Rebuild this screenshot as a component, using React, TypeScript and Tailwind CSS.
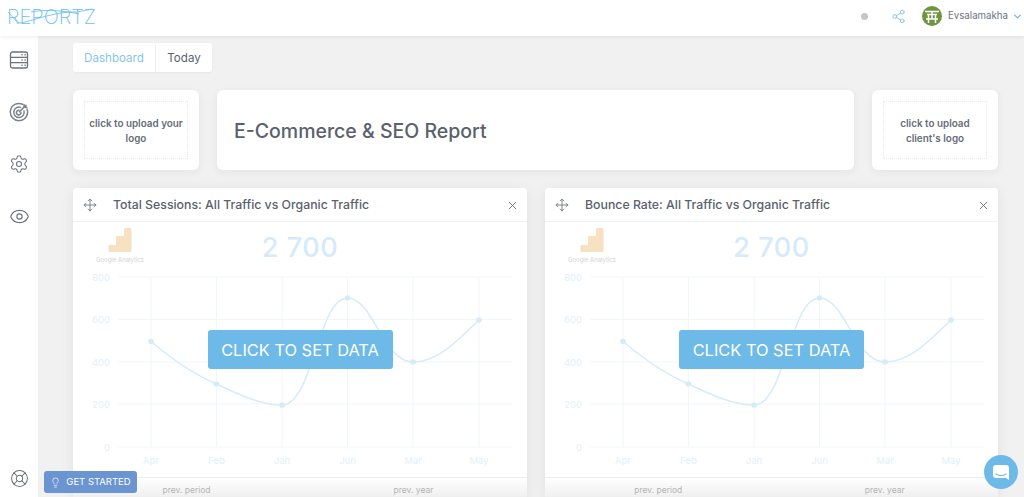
import { ChevronDown, Eye, LifeBuoy, Lightbulb, Move, Settings, Share2, X } from "lucide-react";

const yTicks = [
  { label: "800", y: 8 },
  { label: "600", y: 50.5 },
  { label: "400", y: 93 },
  { label: "200", y: 135 },
  { label: "0", y: 178 },
];

const points = [
  { label: "Apr", x: 78, y: 72.5 },
  { label: "Feb", x: 143.5, y: 115 },
  { label: "Jan", x: 209, y: 136 },
  { label: "Jun", x: 274.5, y: 29 },
  { label: "Mar", x: 340, y: 93 },
  { label: "May", x: 406, y: 51 },
];

function ServerIcon() {
  return (
    <svg width="20" height="20" viewBox="0 0 20 20" fill="none" stroke="#6b727c" strokeWidth="1.3">
      <rect x="1.5" y="2" width="17" height="16" rx="2" />
      <path d="M1.5 7.3H18.5M1.5 12.7H18.5" />
      <path d="M12.5 4.7H13.7M15.5 4.7H16.7M12.5 10H13.7M15.5 10H16.7M12.5 15.3H13.7M15.5 15.3H16.7" strokeWidth="1.4" />
    </svg>
  );
}

function TargetIcon() {
  return (
    <svg width="20" height="20" viewBox="0 0 20 20" fill="none" stroke="#7d838c" strokeWidth="1.5" strokeLinecap="round">
      <path d="M13.5 2.2A8.6 8.6 0 1 0 18 7" />
      <path d="M11.6 5.4A5.2 5.2 0 1 0 15 9" />
      <path d="M10 8.3A2.3 2.3 0 1 0 12 10.5" />
      <path d="M10.5 9.8L17 3.4M15 2.6L15 5.2L17.8 5.2" />
    </svg>
  );
}

function Avatar() {
  return (
    <svg width="20" height="20" viewBox="0 0 20 20">
      <circle cx="10" cy="10" r="10" fill="#6f9440" />
      <path d="M3 5.5H17M5 8.5H15M6.5 8.5V17M13.5 8.5V17M10 5.5V13M4 13H16" stroke="#fff" strokeWidth="1.5" fill="none" />
    </svg>
  );
}

function AnalyticsLogo() {
  return (
    <svg width="24" height="24" viewBox="0 0 24 24" fill="#f6e1c0">
      <rect x="0.5" y="17" width="8" height="7" rx="1" />
      <rect x="8" y="8" width="8.5" height="16" rx="1" />
      <rect x="16" y="0" width="7.5" height="24" rx="1.5" />
    </svg>
  );
}

function Chart() {
  return (
    <svg width="454" height="208" viewBox="0 0 454 208" className="block">
      {yTicks.map((t) => (
        <g key={t.label}>
          <line x1="45" x2="439" y1={t.y} y2={t.y} stroke="#f1f6fa" />
          <text x="37" y={t.y + 3.5} textAnchor="end" fontSize="9.5" fill="#e2f0fa">
            {t.label}
          </text>
        </g>
      ))}
      {points.map((p) => (
        <g key={p.label}>
          <line x1={p.x} x2={p.x} y1="8" y2="178" stroke="#f1f6fa" />
          <text x={p.x} y="195" textAnchor="middle" fontSize="9.5" fill="#e2f0fa">
            {p.label}
          </text>
        </g>
      ))}
      <path
        d="M78 72.5C100 91 120 105 143.5 115C165 125 187 136 209 136C240 136 245 29 274.5 29C300 29 310 93 340 93C365 93 385 71 406 51"
        fill="none"
        stroke="#d6ebf9"
        strokeWidth="1.5"
      />
      {points.map((p) => (
        <circle key={p.label} cx={p.x} cy={p.y} r="2.8" fill="#d6ebf9" />
      ))}
    </svg>
  );
}

function ChartCard({ title }: { title: string }) {
  return (
    <div className="rounded-t bg-white shadow-[0_2px_14px_rgba(0,0,0,0.07)]">
      <div className="flex h-[34px] items-center border-b border-[#f1f4f6] pl-[10px] pr-[8px] pt-[1px]">
        <Move size={14} strokeWidth={1.5} className="text-[#6b727c]" />
        <span className="ml-[16px] pt-[1px] text-[12.3px] font-medium text-[#5a626e]">{title}</span>
        <X size={13} strokeWidth={1.6} className="ml-auto text-[#5a626e]" />
      </div>
      <div className="relative h-[255px]">
        <div className="grid h-[47px] grid-cols-[1fr_auto_1fr]">
          <div className="flex w-[94px] flex-col items-center pt-[6px]">
            <AnalyticsLogo />
            <span className="mt-[4px] whitespace-nowrap text-[6px] leading-[8px] text-[#d4d4d4]">Google Analytics</span>
          </div>
          <div className="pt-[8px] text-[27px] font-medium leading-[36px] tracking-[0.6px] text-[#d6eaf9]">2 700</div>
        </div>
        <Chart />
        <div className="absolute inset-0 flex items-center justify-center">
          <button className="flex h-[39px] w-[185px] items-center justify-center rounded-[3px] bg-[#6db9e8] pt-[1px] text-[16.4px] text-white">
            CLICK TO SET DATA
          </button>
        </div>
      </div>
      <div className="grid h-[24px] grid-cols-2 border-t border-[#eeeeee] bg-gradient-to-b from-white to-[#ececec] pt-[6px] text-center text-[8.5px] leading-[12px] text-[#b4b4b4]">
        <span>prev. period</span>
        <span>prev. year</span>
      </div>
    </div>
  );
}

function LogoCard({ children }: { children: string }) {
  return (
    <div className="rounded-md bg-white p-[11px] shadow-[0_2px_10px_rgba(0,0,0,0.06)]">
      <div className="flex h-full items-center justify-center border border-dotted border-[#e4ebee] px-[2px] pt-[2px] text-center text-[9.9px] font-semibold leading-[15px] text-[#666d79]">
        {children}
      </div>
    </div>
  );
}

export default function App() {
  return (
    <div className="relative flex h-[497px] w-[1024px] flex-col overflow-hidden bg-[#f1f1f1] font-['Inter',sans-serif]">
      <header className="z-10 flex h-9 shrink-0 items-center bg-white pb-1 pl-[7px] pr-[1px] shadow-[0_1px_4px_rgba(0,0,0,0.08)]">
        <div className="relative h-[20px] w-[88px]">
          <span className="text-[20px] font-extralight leading-[20px] text-[#6fc0ee]">REPORTZ</span>
          <svg width="88" height="20" viewBox="0 0 88 20" fill="none" stroke="#6fc0ee" strokeWidth="0.9" className="absolute left-0 top-0">
            <path d="M1 6C6 10 9 18 14 17C28 14 50 5 70 6L85 3" />
            <path d="M24 6C36 3 60 5 72 8" />
          </svg>
        </div>
        <div className="ml-auto flex items-center">
          <span className="h-[7px] w-[7px] rounded-full bg-[#c6c6c6]" />
          <Share2 size={15} strokeWidth={1.5} className="ml-[23.5px] text-[#84c3ee]" />
          <div className="ml-[15.5px]">
            <Avatar />
          </div>
          <span className="ml-[6px] text-[9.7px] text-[#6d747d]">Evsalamakha</span>
          <ChevronDown size={11} strokeWidth={3} className="ml-[4px] text-[#6db9e8]" />
        </div>
      </header>

      <div className="flex min-h-0 flex-1">
        <aside className="flex w-[38px] shrink-0 flex-col items-center gap-[32px] bg-white pb-[9px] pt-[14px] text-[#6b727c]">
          <ServerIcon />
          <TargetIcon />
          <Settings size={20} strokeWidth={1.3} />
          <Eye size={21} strokeWidth={1.3} />
          <LifeBuoy size={19} strokeWidth={1.3} className="mt-auto" />
        </aside>

        <main className="flex min-w-0 flex-1 flex-col pl-[35px] pr-[26px] pt-[7px]">
          <div className="flex h-[29px] shrink-0 self-start rounded-[3px] bg-white pt-[2px] text-[11.6px] shadow-[0_1px_3px_rgba(0,0,0,0.05)]">
            <button className="w-[83px] border-r border-[#eeeeee] text-[#86c6ee]">Dashboard</button>
            <button className="w-[56px] text-[#5a626e]">Today</button>
          </div>

          <div className="mt-[18px] grid h-[80px] shrink-0 grid-cols-[126px_1fr_126px] gap-[18px]">
            <LogoCard>click to upload your logo</LogoCard>
            <div className="flex items-center rounded-md bg-white pl-[17px] pt-[3px] text-[19.5px] font-medium text-[#59616c] shadow-[0_2px_10px_rgba(0,0,0,0.06)]">
              E-Commerce &amp; SEO Report
            </div>
            <LogoCard>click to upload client's logo</LogoCard>
          </div>

          <div className="mt-[18px] grid shrink-0 grid-cols-[454px_453px] gap-[18px]">
            <ChartCard title="Total Sessions: All Traffic vs Organic Traffic" />
            <ChartCard title="Bounce Rate: All Traffic vs Organic Traffic" />
          </div>
        </main>
      </div>

      <button className="absolute bottom-[4px] left-[44px] flex h-[22px] w-[93px] items-center justify-center gap-[5px] rounded-[3px] bg-[#6a95d0] text-[9.5px] text-white">
        <Lightbulb size={11} strokeWidth={1.5} />
        GET STARTED
      </button>
      <button className="absolute bottom-[8px] right-[6px] flex h-[34px] w-[34px] items-center justify-center rounded-full bg-[#6db9e8]">
        <svg width="16" height="15" viewBox="0 0 16 15">
          <path d="M3 0H13A3 3 0 0 1 16 3V15L13 13H3A3 3 0 0 1 0 10V3A3 3 0 0 1 3 0Z" fill="#fff" />
          <path d="M3 9C6 11 10 11 13 9" stroke="#6db9e8" strokeWidth="1.2" fill="none" strokeLinecap="round" />
        </svg>
      </button>
    </div>
  );
}
